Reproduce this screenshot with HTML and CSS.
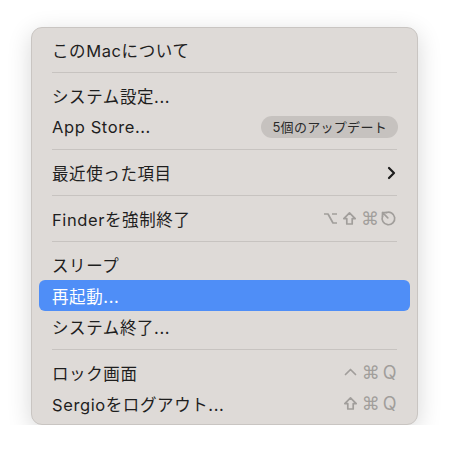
FILE: index.html
```html
<!DOCTYPE html>
<html lang="ja">
<head>
    <meta charset="UTF-8">
    <title>Apple Menu</title>
    <link rel="stylesheet" href="styles.css">
</head>
<body>
    <div class="menu">
        <div class="item">このMacについて</div>
        <div class="sep"></div>
        <div class="item">システム設定...</div>
        <div class="item">App Store...<span class="badge">5個のアップデート</span></div>
        <div class="sep"></div>
        <div class="item">最近使った項目
            <svg class="chevron" width="9" height="14" viewBox="0 0 9 14"><path d="M2 2 L7 7 L2 12" fill="none" stroke="#1d1d1d" stroke-width="2.2" stroke-linecap="round" stroke-linejoin="round"/></svg>
        </div>
        <div class="sep"></div>
        <div class="item">Finderを強制終了
            <span class="keys">
                <svg class="key-svg" width="15" height="15" viewBox="0 0 15 15"><path d="M1 3 H5 L10 12 H14 M9 3 H14" fill="none" stroke="#a19e9b" stroke-width="1.7" stroke-linejoin="round"/></svg>
                <svg class="key-svg" width="15" height="15" viewBox="0 0 15 15"><path d="M7.5 1.8 L13.2 7.6 H10.2 V13 H4.8 V7.6 H1.8 Z" fill="none" stroke="#a19e9b" stroke-width="1.7" stroke-linejoin="round"/></svg>
                <span class="key">⌘</span>
                <svg class="key-svg" width="17" height="17" viewBox="0 0 17 17"><path d="M6 2.6 A6.3 6.3 0 1 1 2.6 6" fill="none" stroke="#a19e9b" stroke-width="1.7" stroke-linecap="round"/><path d="M2.5 2.5 L7.8 7.8 M2.5 2.5 H6.2 M2.5 2.5 V6.2" fill="none" stroke="#a19e9b" stroke-width="1.7" stroke-linecap="round"/></svg>
            </span>
        </div>
        <div class="sep"></div>
        <div class="item">スリープ</div>
        <div class="item selected">再起動...</div>
        <div class="item">システム終了...</div>
        <div class="sep"></div>
        <div class="item">ロック画面
            <span class="keys">
                <svg class="key-svg" width="15" height="15" viewBox="0 0 15 15"><path d="M2.5 9.5 L7.5 4.5 L12.5 9.5" fill="none" stroke="#a19e9b" stroke-width="1.7" stroke-linecap="round" stroke-linejoin="round"/></svg>
                <span class="key">⌘</span><span class="key letter">Q</span>
            </span>
        </div>
        <div class="item">Sergioをログアウト...
            <span class="keys">
                <svg class="key-svg" width="15" height="15" viewBox="0 0 15 15"><path d="M7.5 1.8 L13.2 7.6 H10.2 V13 H4.8 V7.6 H1.8 Z" fill="none" stroke="#a19e9b" stroke-width="1.7" stroke-linejoin="round"/></svg>
                <span class="key">⌘</span><span class="key letter">Q</span>
            </span>
        </div>
    </div>
</body>
</html>
```

FILE: styles.css
```css
body {
    margin: 0;
    background-color: #fff;
    font-family: Inter, "Noto Sans CJK JP", sans-serif;
}
.menu {
    margin: 27px 0 0 31px;
    padding: 6px 0 7px;
    box-sizing: border-box;
    height: 398px;
    width: 387px;
    background-color: #dedad7;
    border: 1px solid #c9c5c2;
    border-radius: 11px;
    box-shadow: 0 6px 24px rgba(0, 0, 0, 0.16);
}
.item {
    display: flex;
    align-items: center;
    justify-content: space-between;
    height: 31px;
    margin: 0 7px;
    padding: 0 13px;
    border-radius: 6px;
    font-size: 16.5px;
    letter-spacing: 0.6px;
    color: #1e1e1e;
}
.item.selected {
    background-color: #4f8ef7;
    color: #fff;
}
.sep {
    height: 1px;
    margin: 7px 20px;
    background-color: #c7c3c0;
}
.badge {
    height: 22px;
    padding: 0 11px;
    margin-right: -1px;
    display: flex;
    align-items: center;
    border-radius: 11px;
    background-color: #c6c2bf;
    font-size: 13px;
    letter-spacing: 0.3px;
    color: #2a2a2a;
}
.chevron {
    margin-right: 1px;
}
.keys {
    display: flex;
    align-items: center;
    gap: 4px;
    color: #a19e9b;
}
.key {
    font-family: "DejaVu Sans", sans-serif;
    font-size: 18px;
    line-height: 1;
    width: 15px;
    text-align: center;
}
.key.letter {
    font-family: Inter, sans-serif;
    font-size: 18px;
    width: auto;
    margin-left: 2px;
}
.key-svg {
    display: block;
}
```
